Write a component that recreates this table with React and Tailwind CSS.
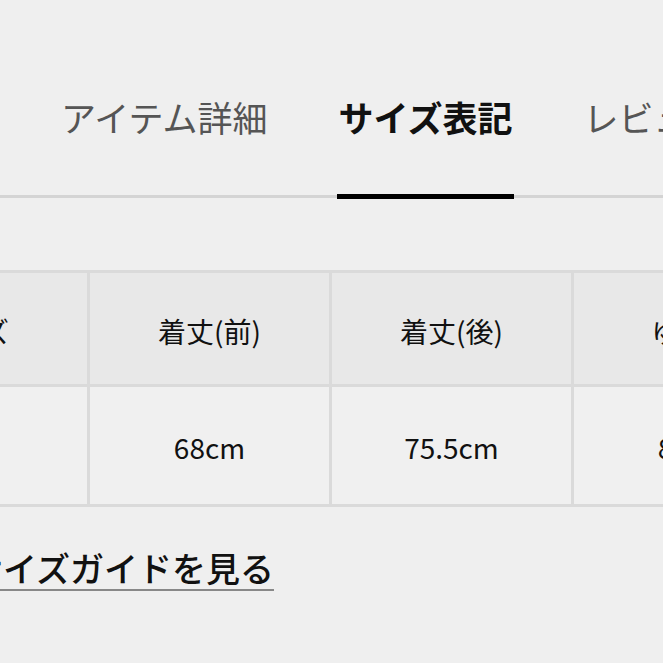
const TABS = [
  { label: 'アイテム詳細', active: false },
  { label: 'サイズ表記', active: true },
  { label: 'レビュー', active: false },
]

const HEAD = ['サイズ', '着丈(前)', '着丈(後)', 'ゆき丈']
const ROW = ['F', '68cm', '75.5cm', '82cm']

export default function App() {
  return (
    <div
      className="w-[663px] h-[663px] overflow-hidden bg-[#efefef] text-[#111]"
      style={{ fontFamily: '"Noto Sans CJK JP", "Noto Sans", sans-serif' }}
    >
      {/* Tabs */}
      <nav className="flex items-start gap-[67px] pl-[59px] pt-[99px] border-b-[3px] border-[#d4d4d4] whitespace-nowrap">
        {TABS.map(t => (
          <div
            key={t.label}
            className={`px-[2px] pb-[60px] -mb-[4px] border-b-[5px] text-[35px] leading-none ${
              t.active ? 'border-black font-bold text-[#111]' : 'border-transparent text-[#555]'
            }`}
          >
            {t.label}
          </div>
        ))}
      </nav>

      {/* Size table */}
      <div className="mt-[72px] ml-[-152px] w-max border-t-[3px] border-[#dadada] text-[28px] leading-none">
        <div className="flex border-b-[3px] border-[#dadada] bg-[#e8e8e8]">
          {HEAD.map(h => (
            <div key={h} className="w-[242px] h-[111px] shrink-0 border-r-[3px] border-[#dadada] flex items-center justify-center pt-[4px]">
              {h}
            </div>
          ))}
        </div>
        <div className="flex border-b-[3px] border-[#dadada] bg-[#f0f0f0]">
          {ROW.map((v, i) => (
            <div key={i} className="w-[242px] h-[117px] shrink-0 border-r-[3px] border-[#dadada] flex items-center justify-center pt-[2px]">
              {v}
            </div>
          ))}
        </div>
      </div>

      {/* Size guide link */}
      <div className="mt-[44px] ml-[-31px] whitespace-nowrap">
        <a className="text-[34px] leading-none font-medium text-[#111] underline decoration-[#888] decoration-2 underline-offset-[7px]">
          サイズガイドを見る
        </a>
      </div>
    </div>
  )
}
